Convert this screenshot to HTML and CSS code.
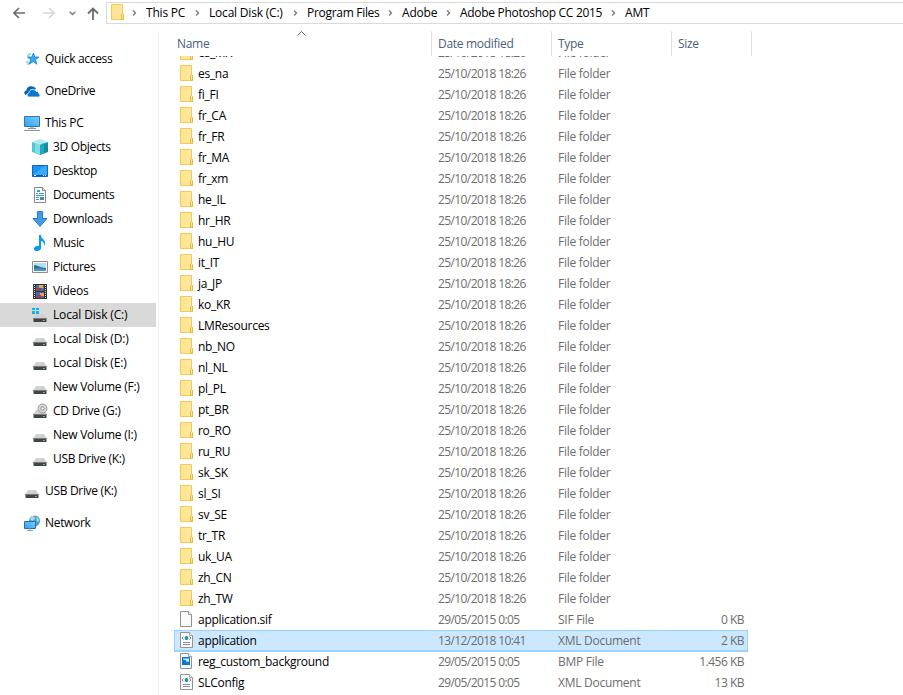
FILE: index.html
```html
<!DOCTYPE html>
<html lang="en">
<head>
<meta charset="utf-8">
<title>AMT</title>
<link rel="stylesheet" href="styles.css">
</head>
<body>
<svg class="defs" width="0" height="0">
<defs>
<linearGradient id="gf" x1="0" x2="1"><stop offset="0" stop-color="#ffe48c"/><stop offset="1" stop-color="#ffe9a3"/></linearGradient>
<linearGradient id="gb" x1="0" y1="1" x2="1" y2="0"><stop offset="0" stop-color="#2ba3f5"/><stop offset="1" stop-color="#7ccbff"/></linearGradient>
<symbol id="folder" viewBox="0 0 14 16"><path d="M.5.5h11v9.500l1 1v4.500H.5z" fill="url(#gf)" stroke="#efcb5d"/><path d="M10.500 15v-4.500l1-1 1 1v5z" fill="#ffe694" stroke="#e5b93a"/></symbol>
<symbol id="file" viewBox="0 0 14 16"><path d="M.5.500h8l3 3v12h-11z" fill="#fafafa" stroke="#929292"/><path d="M8.500.5v3h3" fill="#fff" stroke="#929292"/></symbol>
<symbol id="xml" viewBox="0 0 14 16"><path d="M.5.5h9l3 3v12H.5z" fill="#fafafa" stroke="#929292"/><path d="M9.500.5v3h3" fill="#fff" stroke="#a0a0a0"/><path d="M3.500 4.500L2 6l1.500 1.500M9.500 4.500L11 6 9.500 7.500" fill="none" stroke="#777" stroke-width=".9"/><circle cx="6.500" cy="6" r="1.900" fill="#1683c6"/><path d="M5.500 5.500h2v1h-1z" fill="#42ba83"/><path d="M3 10.500h7M3 12.500h7" stroke="#8d8da5"/></symbol>
<symbol id="bmp" viewBox="0 0 14 16"><path d="M.5.500h8l3 3v12h-11z" fill="#fafafa" stroke="#929292"/><path d="M8.500.5v3h3" fill="#fff" stroke="#a0a0a0"/><path d="M2 4h8v8H2z" fill="#0878d4"/><path d="M3 5.500h6v4L8 8l-1 1.500L5.500 7 3 6.500z" fill="#d3efff"/></symbol>
<symbol id="star" viewBox="0 0 16 16"><path d="M9.500 2l1.200 4 4.300.1-3.500 2.500 1.300 4.600-3.600-2.600-4 2.600 1.400-4.700-3.100-2.300 4.200-.1z" fill="#35a9ef" stroke="#1583cc" stroke-width=".8"/><path d="M4 3h3M3 5h3M2 11h3M3 13h2" stroke="#56b5ee"/></symbol>
<symbol id="cloud" viewBox="0 0 16 16"><path d="M1.500 12C-.5 10.500 0 8 2.500 7.500 2.300 4.500 6 2.700 8.500 3.500c1.800.2 3 1.500 3.500 2.500" fill="#0863b6"/><path d="M5 14c-2.500-.5-2.500-3.700 0-4.200.3-4 5.500-4.500 7-1.500 2-.2 2.800 1.200 2.800 2.200 1.800.8 1.500 3-.2 3.500z" fill="#0878d4" stroke="#fff" stroke-width=".8"/></symbol>
<symbol id="pc" viewBox="0 0 16 16"><path d="M.5 1.500h15v10H.5z" fill="url(#gb)" stroke="#38759e"/><path d="M6 12h4v1H6z" fill="#b6c4cd"/><path d="M4 13.500h8M0 15.500h16" stroke="#8797a2"/></symbol>
<symbol id="cube" viewBox="0 0 16 16"><path d="M0 3L8 0l8 3-8 3z" fill="#aeeaf0"/><path d="M0 3l8 3v10l-8-3z" fill="#53c6d4"/><path d="M16 3L8 6v10l8-3z" fill="#138fa4"/><path d="M3 4l5 2v10l-5-2z" fill="#81dce5"/><path d="M8 6l4-2v10l-4 2z" fill="#21a9bd"/></symbol>
<symbol id="desktop" viewBox="0 0 16 16"><path d="M.5 2.500h15v11H.5z" fill="#1996f5" stroke="#096bb6"/><path d="M1 12L12 3h3v9z" fill="#35aaff"/><path d="M1 12.500h14" stroke="#075599"/><path d="M2 12.500h2M11 12.500h1M13 12.500h1" stroke="#fff"/></symbol>
<symbol id="doc" viewBox="0 0 16 16"><path d="M2.500.5h8l3 3v12h-11z" fill="#fff" stroke="#858585"/><path d="M10.500.5v3h3" fill="#eee" stroke="#858585"/><path d="M4 6.500h2M7 6.500h5M4 8.500h8M4 10.500h3M4 12.500h3" stroke="#2f9be3"/><path d="M5 3h3v2H5z" fill="#299de0"/><path d="M8 10h4v3H8z" fill="#4b899b"/></symbol>
<symbol id="down" viewBox="0 0 16 16"><path d="M5.500.5h5v7h4.500l-7 8-7-8h4.500z" fill="#429be3" stroke="#267bc4"/></symbol>
<symbol id="music" viewBox="0 0 16 16"><path d="M7 0h2c0 4 4 4 4 8 0 1.500-.5 2-1 3 .5-3-1.500-5-3-5v7c0 2-2 3-4 3-3 0-4-2-2-4 1-1 2.500-1.500 4-1z" fill="#059bf0"/></symbol>
<symbol id="pic" viewBox="0 0 16 16"><path d="M.5 2.500h15v11H.5z" fill="#fff" stroke="#8d8d8d"/><path d="M2 4h12v8H2z" fill="#b5ddf5"/><path d="M2 6c4 0 6 3 12 3v1H2z" fill="#267a85"/><path d="M2 10c4-1 7 0 12 0v2H2z" fill="#4f92cb"/></symbol>
<symbol id="video" viewBox="0 0 16 16"><path d="M1 1h14v15H1z" fill="#333"/><path d="M2.500 2v13M13.500 2v13" stroke="#e0e0e0" stroke-dasharray="1 1"/><path d="M4 2h8v6H4zM4 9h8v6H4z" fill="#436bc0"/><path d="M7 2h4v3H7zM8 10h4v3H8z" fill="#efa832"/><path d="M5 5h4v3H5zM5 12h4v3H5z" fill="#a43e46"/></symbol>
<symbol id="disk" viewBox="0 0 16 16"><path d="M4 7h8l2.500 4h-13z" fill="#cfd0d1"/><path d="M1.500 11h13v4h-13z" fill="#424345"/><path d="M1 11.500h13.500" stroke="#797a7c"/><path d="M11 13h1.500v1H11z" fill="#64ec66"/></symbol>
<symbol id="cdisk" viewBox="0 0 16 16"><use href="#disk"/><path d="M0 1h3v2H0zM4 1h3v2H4zM0 4h3v3H0zM4 4h3v3H4z" fill="#05b7ee"/></symbol>
<symbol id="cd" viewBox="0 0 16 16"><use href="#disk"/><circle cx="10.500" cy="5.500" r="4.500" fill="#d8d8d8" stroke="#999"/><circle cx="10.500" cy="5.500" r="1.700" fill="#fff" stroke="#888"/></symbol>
<symbol id="net" viewBox="0 0 16 16"><circle cx="10.500" cy="6" r="5.500" fill="#4b9fc9"/><path d="M8 1q3 0 3 3L8 6 6 4zM12 2q3 1 3 4l-2 1z" fill="#a5d8e9"/><path d="M.5 6.500h11v7H.5z" fill="url(#gb)" stroke="#2a719f"/><path d="M3 15.500h6M6 13v2" stroke="#87a1b0"/></symbol>
<symbol id="sep" viewBox="0 0 5 8"><path d="M1 1.500L3.500 4 1 6.500" fill="none" stroke="#777" stroke-width="1.300"/></symbol>
</defs>
</svg>
<header class="toolbar">
<nav class="nav">
<svg class="back" viewBox="0 0 12 12"><path d="M12 6H1M6 1L1 6l5 5" fill="none" stroke="#6c6c6c" stroke-width="1.600"/></svg>
<svg class="forward" viewBox="0 0 12 12"><path d="M0 6h11M6 1l5 5-5 5" fill="none" stroke="#d5d5d5" stroke-width="1.600"/></svg>
<svg class="recent" viewBox="0 0 7 5"><path d="M.7.8l2.800 2.700L6.300.8" fill="none" stroke="#777" stroke-width="1.400"/></svg>
<svg class="up" viewBox="0 0 12 13"><path d="M6 13V1.500M1 6.500l5-5 5 5" fill="none" stroke="#6c6c6c" stroke-width="1.800"/></svg>
</nav>
<div class="address">
<svg class="ficon"><use href="#folder"/></svg>
<ol class="crumbs">
<li class="c1"><svg><use href="#sep"/></svg><span>This PC</span></li>
<li class="c2"><svg><use href="#sep"/></svg><span>Local Disk (C:)</span></li>
<li class="c3"><svg><use href="#sep"/></svg><span>Program Files</span></li>
<li class="c4"><svg><use href="#sep"/></svg><span>Adobe</span></li>
<li class="c5"><svg><use href="#sep"/></svg><span>Adobe Photoshop CC 2015</span></li>
<li class="c6"><svg><use href="#sep"/></svg><span>AMT</span></li>
</ol>
</div>
</header>
<div class="main">
<aside class="side">
<ul>
<li><svg><use href="#star"/></svg><span>Quick access</span></li>
</ul>
<ul>
<li><svg><use href="#cloud"/></svg><span>OneDrive</span></li>
</ul>
<ul>
<li><svg><use href="#pc"/></svg><span>This PC</span></li>
<li class="sub"><svg><use href="#cube"/></svg><span>3D Objects</span></li>
<li class="sub"><svg><use href="#desktop"/></svg><span>Desktop</span></li>
<li class="sub"><svg><use href="#doc"/></svg><span>Documents</span></li>
<li class="sub"><svg><use href="#down"/></svg><span>Downloads</span></li>
<li class="sub"><svg><use href="#music"/></svg><span>Music</span></li>
<li class="sub"><svg><use href="#pic"/></svg><span>Pictures</span></li>
<li class="sub"><svg><use href="#video"/></svg><span>Videos</span></li>
<li class="sub drive current"><svg><use href="#cdisk"/></svg><span>Local Disk (C:)</span></li>
<li class="sub drive"><svg><use href="#disk"/></svg><span>Local Disk (D:)</span></li>
<li class="sub drive"><svg><use href="#disk"/></svg><span>Local Disk (E:)</span></li>
<li class="sub volume"><svg><use href="#disk"/></svg><span>New Volume (F:)</span></li>
<li class="sub volume"><svg><use href="#cd"/></svg><span>CD Drive (G:)</span></li>
<li class="sub volume"><svg><use href="#disk"/></svg><span>New Volume (I:)</span></li>
<li class="sub"><svg><use href="#disk"/></svg><span>USB Drive (K:)</span></li>
</ul>
<ul>
<li><svg><use href="#disk"/></svg><span>USB Drive (K:)</span></li>
</ul>
<ul>
<li><svg><use href="#net"/></svg><span>Network</span></li>
</ul>
</aside>
<main class="content">
<div class="head">
<div class="h-name">Name<svg class="sort" viewBox="0 0 9 5"><path d="M.5 4.500l4-4 4 4" fill="none" stroke="#666"/></svg></div><div>Date modified</div><div>Type</div><div>Size</div>
</div>
<div class="list">
<div class="row"><svg><use href="#folder"/></svg><b>es_MX</b><i>25/10/2018 18:26</i><em>File folder</em></div>
<div class="row"><svg><use href="#folder"/></svg><b>es_na</b><i>25/10/2018 18:26</i><em>File folder</em></div>
<div class="row"><svg><use href="#folder"/></svg><b>fi_FI</b><i>25/10/2018 18:26</i><em>File folder</em></div>
<div class="row"><svg><use href="#folder"/></svg><b>fr_CA</b><i>25/10/2018 18:26</i><em>File folder</em></div>
<div class="row"><svg><use href="#folder"/></svg><b>fr_FR</b><i>25/10/2018 18:26</i><em>File folder</em></div>
<div class="row"><svg><use href="#folder"/></svg><b>fr_MA</b><i>25/10/2018 18:26</i><em>File folder</em></div>
<div class="row"><svg><use href="#folder"/></svg><b>fr_xm</b><i>25/10/2018 18:26</i><em>File folder</em></div>
<div class="row"><svg><use href="#folder"/></svg><b>he_IL</b><i>25/10/2018 18:26</i><em>File folder</em></div>
<div class="row"><svg><use href="#folder"/></svg><b>hr_HR</b><i>25/10/2018 18:26</i><em>File folder</em></div>
<div class="row"><svg><use href="#folder"/></svg><b>hu_HU</b><i>25/10/2018 18:26</i><em>File folder</em></div>
<div class="row"><svg><use href="#folder"/></svg><b>it_IT</b><i>25/10/2018 18:26</i><em>File folder</em></div>
<div class="row"><svg><use href="#folder"/></svg><b>ja_JP</b><i>25/10/2018 18:26</i><em>File folder</em></div>
<div class="row"><svg><use href="#folder"/></svg><b>ko_KR</b><i>25/10/2018 18:26</i><em>File folder</em></div>
<div class="row"><svg><use href="#folder"/></svg><b>LMResources</b><i>25/10/2018 18:26</i><em>File folder</em></div>
<div class="row"><svg><use href="#folder"/></svg><b>nb_NO</b><i>25/10/2018 18:26</i><em>File folder</em></div>
<div class="row"><svg><use href="#folder"/></svg><b>nl_NL</b><i>25/10/2018 18:26</i><em>File folder</em></div>
<div class="row"><svg><use href="#folder"/></svg><b>pl_PL</b><i>25/10/2018 18:26</i><em>File folder</em></div>
<div class="row"><svg><use href="#folder"/></svg><b>pt_BR</b><i>25/10/2018 18:26</i><em>File folder</em></div>
<div class="row"><svg><use href="#folder"/></svg><b>ro_RO</b><i>25/10/2018 18:26</i><em>File folder</em></div>
<div class="row"><svg><use href="#folder"/></svg><b>ru_RU</b><i>25/10/2018 18:26</i><em>File folder</em></div>
<div class="row"><svg><use href="#folder"/></svg><b>sk_SK</b><i>25/10/2018 18:26</i><em>File folder</em></div>
<div class="row"><svg><use href="#folder"/></svg><b>sl_SI</b><i>25/10/2018 18:26</i><em>File folder</em></div>
<div class="row"><svg><use href="#folder"/></svg><b>sv_SE</b><i>25/10/2018 18:26</i><em>File folder</em></div>
<div class="row"><svg><use href="#folder"/></svg><b>tr_TR</b><i>25/10/2018 18:26</i><em>File folder</em></div>
<div class="row"><svg><use href="#folder"/></svg><b>uk_UA</b><i>25/10/2018 18:26</i><em>File folder</em></div>
<div class="row"><svg><use href="#folder"/></svg><b>zh_CN</b><i>25/10/2018 18:26</i><em>File folder</em></div>
<div class="row"><svg><use href="#folder"/></svg><b>zh_TW</b><i>25/10/2018 18:26</i><em>File folder</em></div>
<div class="row"><svg><use href="#file"/></svg><b>application.sif</b><i>29/05/2015 0:05</i><em>SIF File</em><u>0 KB</u></div>
<div class="row selected"><svg><use href="#xml"/></svg><b>application</b><i>13/12/2018 10:41</i><em>XML Document</em><u>2 KB</u></div>
<div class="row"><svg><use href="#bmp"/></svg><b>reg_custom_background</b><i>29/05/2015 0:05</i><em>BMP File</em><u>1.456 KB</u></div>
<div class="row"><svg><use href="#xml"/></svg><b>SLConfig</b><i>29/05/2015 0:05</i><em>XML Document</em><u>13 KB</u></div>
</div>
</main>
</div>
</body>
</html>
```
FILE: styles.css
```css
* { box-sizing: border-box; }
body { margin: 0; width: 903px; height: 695px; overflow: hidden; background: #fff; color: #000; font: 12px/21px "Open Sans", "Noto Sans", sans-serif; letter-spacing: -0.27px; white-space: nowrap; display: flex; flex-direction: column; }
.defs { position: absolute; }
svg { display: block; flex: none; }
ul, ol { list-style: none; margin: 0; padding: 0; }

.toolbar { display: flex; height: 31px; padding-top: 2px; flex: none; }
.nav { width: 106px; height: 22px; display: flex; align-items: center; padding-left: 13px; }
.back, .forward { width: 12px; height: 12px; }
.forward { margin-left: 18px; }
.recent { width: 7px; height: 5px; margin-left: 14px; }
.up { width: 12px; height: 13px; margin-left: 11px; }
.address { flex: 1; height: 22px; border: 1px solid #d9d9d9; border-right: 0; display: flex; align-items: center; padding-left: 4px; }
.ficon { width: 14px; height: 16px; margin-top: -2px; }
.crumbs { display: flex; margin-left: 7px; line-height: 20px; letter-spacing: -0.2px; }
.crumbs li { display: flex; align-items: center; }
.crumbs svg { width: 5px; height: 8px; margin-right: 9px; }
.c1 { width: 63px; }
.c2 { width: 98px; }
.c3 { width: 95px; letter-spacing: -0.3px; }
.c4 { width: 58px; }
.c5 { width: 165px; letter-spacing: -0.3px; }

.main { display: flex; flex: 1; min-height: 0; }
.side { width: 159px; border-right: 1px solid #f0f0f0; padding: 16px 2px 0 0; display: flex; flex-direction: column; gap: 8px; }
.side li { height: 24px; display: flex; padding-left: 24px; line-height: 23px; letter-spacing: -0.32px; }
.side .sub { padding-left: 32px; }
.side .drive { letter-spacing: -0.15px; }
.side .volume { letter-spacing: -0.25px; }
.side .current { background: #d9d9d9; }
.side svg { width: 16px; height: 16px; margin: 4px 5px 0 0; }

.content { flex: 1; display: flex; flex-direction: column; min-width: 0; }
.head { height: 25px; flex: none; display: grid; grid-template: 25px / 273px 120px 120px 80px; line-height: 25px; color: #4c607a; letter-spacing: -0.3px; }
.head div { border-right: 1px solid #e2e2e2; padding-left: 6px; }
.head .h-name { padding-left: 18px; display: flex; }
.sort { width: 9px; height: 5px; margin-left: 88px; }
.list { flex: 1; min-height: 0; overflow: hidden; padding-left: 15px; display: flex; flex-direction: column; }
.row { width: 574px; height: 21px; flex: none; display: grid; grid-template: 21px / 24px 240px 120px 100px 1fr; padding-right: 4px; color: #6d6d6d; }
.row:first-child { margin-top: -14px; }
.row svg { width: 14px; height: 16px; margin: 2px 0 0 6px; }
.row b { font-weight: 400; color: #000; letter-spacing: -0.28px; }
.row i, .row em { font-style: normal; }
.row i { letter-spacing: -0.6px; }
.row u { text-decoration: none; text-align: right; letter-spacing: -0.5px; }
.selected { background: #cce8ff; box-shadow: inset 0 0 0 1px #99d1ff, 0 1px 0 #99d1ff; }
```
